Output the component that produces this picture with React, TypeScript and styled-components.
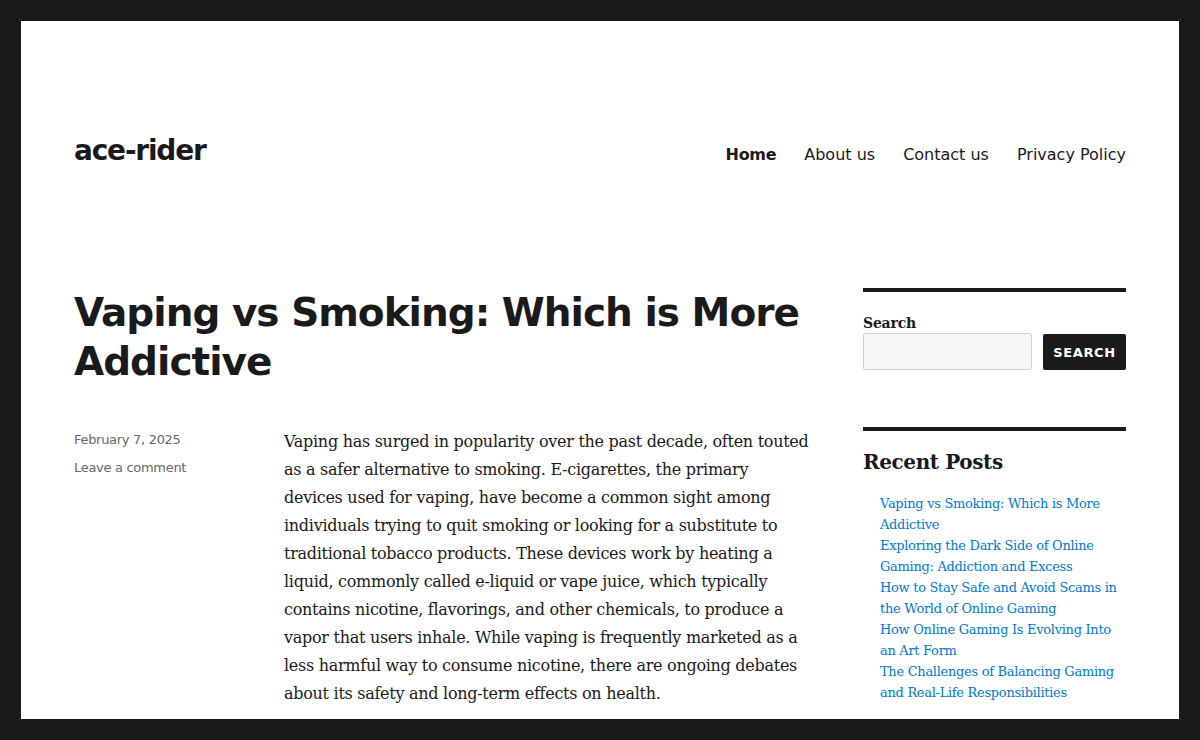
import React from 'react';
import styled, { createGlobalStyle } from 'styled-components';

const sans = `'DejaVu Sans', 'Noto Sans', sans-serif`;
const serif = `'DejaVu Serif', 'Liberation Serif', serif`;

const GlobalStyle = createGlobalStyle`
  html, body {
    margin: 0;
    padding: 0;
    background: #1a1a1a;
  }
  * {
    box-sizing: border-box;
  }
`;

const Frame = styled.div`
  height: 740px;
  padding: 21px;
  background: #1a1a1a;
`;

const Site = styled.div`
  height: 100%;
  background: #fff;
  overflow: hidden;
  padding: 0 53px;
  color: #1a1a1a;
`;

const Header = styled.header`
  display: flex;
  justify-content: space-between;
  align-items: flex-start;
  padding: 112px 0 120px;
`;

const SiteTitle = styled.a`
  font-family: ${sans};
  font-weight: 700;
  font-size: 28px;
  line-height: 35px;
  letter-spacing: -1.2px;
  color: #1a1a1a;
  text-decoration: none;
`;

const Nav = styled.nav`
  display: flex;
  gap: 28px;
  padding-top: 11px;
`;

const NavLink = styled.a<{ $current?: boolean }>`
  font-family: ${sans};
  font-size: 16px;
  line-height: 21px;
  font-weight: ${(p) => (p.$current ? 700 : 400)};
  letter-spacing: ${(p) => (p.$current ? '-0.3px' : '0')};
  color: #1a1a1a;
  text-decoration: none;
`;

const Body = styled.div`
  display: grid;
  grid-template-columns: 736px 263px;
  column-gap: 53px;
`;

const Article = styled.article``;

const EntryTitle = styled.h1`
  font-family: ${sans};
  font-weight: 700;
  font-size: 39px;
  line-height: 49px;
  letter-spacing: -1px;
  margin: 0 0 42px;
`;

const EntryRow = styled.div`
  display: grid;
  grid-template-columns: 158px 1fr;
  column-gap: 52px;
`;

const Meta = styled.div`
  display: flex;
  flex-direction: column;
  gap: 7px;
  padding-top: 1px;
`;

const MetaItem = styled.a`
  font-family: ${sans};
  font-size: 13px;
  line-height: 21px;
  letter-spacing: -0.3px;
  color: #686868;
  text-decoration: none;
`;

const Content = styled.div`
  font-family: ${serif};
  font-size: 16px;
  line-height: 28px;
  letter-spacing: -0.28px;
  p {
    margin: 0 0 28px;
  }
`;

const Sidebar = styled.aside`
  display: flex;
  flex-direction: column;
`;

const Widget = styled.section`
  border-top: 4px solid #1a1a1a;
  padding-top: 21px;
  margin-bottom: 57px;
`;

const SearchLabel = styled.label`
  display: block;
  font-family: ${serif};
  font-weight: 700;
  font-size: 14px;
  line-height: 20px;
  letter-spacing: -0.2px;
`;

const SearchRow = styled.div`
  display: flex;
  gap: 11px;
`;

const SearchInput = styled.input`
  flex: 1;
  height: 37px;
  background: #f7f7f7;
  border: 1px solid #d1d1d1;
  border-radius: 2px;
  font-family: ${serif};
  font-size: 16px;
  padding: 0 8px;
  min-width: 0;
`;

const SearchButton = styled.button`
  width: 83px;
  height: 36px;
  margin-top: 1px;
  background: #1a1a1a;
  color: #fff;
  border: none;
  border-radius: 2px;
  font-family: ${sans};
  font-weight: 700;
  font-size: 13px;
  letter-spacing: 0.6px;
  text-transform: uppercase;
  padding: 0;
`;

const WidgetTitle = styled.h2`
  font-family: ${serif};
  font-weight: 700;
  font-size: 20px;
  line-height: 20px;
  letter-spacing: -0.4px;
  margin: 0 0 21px;
`;

const PostList = styled.ul`
  list-style: none;
  margin: 0;
  padding: 0 0 0 17px;
`;

const PostLink = styled.a`
  font-family: ${serif};
  font-size: 13px;
  line-height: 21px;
  letter-spacing: -0.3px;
  color: #007acc;
  text-decoration: none;
`;

const recent = [
  'Vaping vs Smoking: Which is More Addictive',
  'Exploring the Dark Side of Online Gaming: Addiction and Excess',
  'How to Stay Safe and Avoid Scams in the World of Online Gaming',
  'How Online Gaming Is Evolving Into an Art Form',
  'The Challenges of Balancing Gaming and Real-Life Responsibilities',
];

const App: React.FC = () => {
  return (
    <>
      <GlobalStyle />
      <Frame>
        <Site>
          <Header>
            <SiteTitle href="#">ace-rider</SiteTitle>
            <Nav>
              <NavLink href="#" $current>Home</NavLink>
              <NavLink href="#">About us</NavLink>
              <NavLink href="#">Contact us</NavLink>
              <NavLink href="#">Privacy Policy</NavLink>
            </Nav>
          </Header>
          <Body>
            <Article>
              <EntryTitle>Vaping vs Smoking: Which is More Addictive</EntryTitle>
              <EntryRow>
                <Meta>
                  <MetaItem href="#">February 7, 2025</MetaItem>
                  <MetaItem href="#">Leave a comment</MetaItem>
                </Meta>
                <Content>
                  <p>
                    Vaping has surged in popularity over the past decade, often touted as a safer
                    alternative to smoking. E-cigarettes, the primary devices used for vaping, have
                    become a common sight among individuals trying to quit smoking or looking for a
                    substitute to traditional tobacco products. These devices work by heating a
                    liquid, commonly called e-liquid or vape juice, which typically contains
                    nicotine, flavorings, and other chemicals, to produce a vapor that users inhale.
                    While vaping is frequently marketed as a less harmful way to consume nicotine,
                    there are ongoing debates about its safety and long-term effects on health.
                  </p>
                </Content>
              </EntryRow>
            </Article>
            <Sidebar>
              <Widget>
                <SearchLabel htmlFor="s">Search</SearchLabel>
                <SearchRow>
                  <SearchInput id="s" type="search" />
                  <SearchButton>Search</SearchButton>
                </SearchRow>
              </Widget>
              <Widget>
                <WidgetTitle>Recent Posts</WidgetTitle>
                <PostList>
                  {recent.map((t) => (
                    <li key={t}>
                      <PostLink href="#">{t}</PostLink>
                    </li>
                  ))}
                </PostList>
              </Widget>
            </Sidebar>
          </Body>
        </Site>
      </Frame>
    </>
  );
};

export default App;
